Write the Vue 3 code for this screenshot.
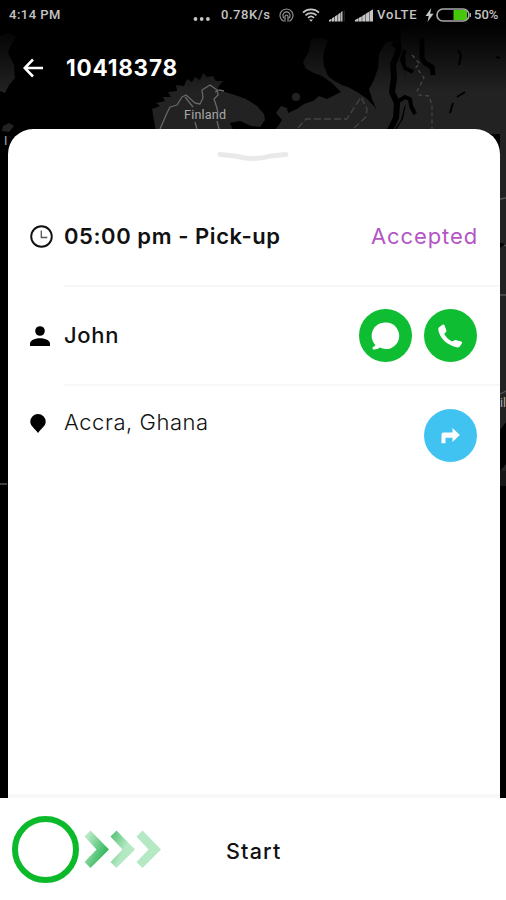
<template>
    <div class="screen">
        <svg class="map" viewBox="0 0 506 900" aria-hidden="true">
            <defs>
                <linearGradient id="shade" x1="0" y1="0" x2="0" y2="1">
                    <stop offset="0" stop-color="#000" stop-opacity="1" />
                    <stop offset="0.3" stop-color="#000" stop-opacity="0.95" />
                    <stop offset="1" stop-color="#000" stop-opacity="0" />
                </linearGradient>
            </defs>
            <rect width="506" height="900" fill="#000" />
            <!-- land -->
            <g fill="#222">
                <path d="M0 36l8-3 8 4-5 8-3 8 6 12 1 13-6 7-4 8-5-2z" />
                <path d="M3 126l6-3 5 3-5 6-7-1z" />
                <path
                    d="M156 132L152 109 160 106 156 103 165 101 163 97 171 97 168 92 177 91 176 85 184 86 187 79 192 82 195 77 200 80 203 73 207 77 213 76 216 81 223 81 219 86 217 91 225 92 235 95 246 99 257 106 264 114 265 120 260 127 251 126 240 121 230 123 234 132z"
                />
                <path d="M321 38l7 2-3 8-2 9 1 9 4 10 5 4 9 5 6 2 9 5 9 6 8 8 3 5-5-12-3-10 5-9 4-12 1-14 7-12 11-1 6 8 1 19 2 10-2 13 4 9-4 8-3 12-6 9H276l6-9-6-7 5-7 6 2 1 5 9-4 7-5 9-3 6-5 8 3 8-4 6-3-9-9-10-7-8-3-8-4-3-7 6-11 2-12z" />
                <path
                    d="M400 20h106v480l-6-15V134H394l4-7 5-8 3-15-2-7-4-6 6-15-3-8 3-8-5-12z"
                />
                <circle cx="296" cy="97" r="4" />
            </g>
            <!-- inlets and lakes -->
            <g fill="none" stroke="#000" stroke-linejoin="round">
                <path d="M393 43l6 4 -2 8-4 9 1 14-2 14 5 11-1 15-7 14" stroke-width="6" />
                <path d="M397 102l8-5 5 2 1 7 4 8" stroke-width="4" />
                <path d="M422 38v20l3 5 7 4 1 8" stroke-width="5" />
                <path d="M405 50l-3 9 3 9 8 4" stroke-width="4" />
                <path d="M453 103l-3 10M458 50l3 5-2 10M457 97l8-5M500 58l-4-1" stroke-width="2" />
            </g>
            <rect width="506" height="92" fill="url(#shade)" />
            <!-- borders -->
            <g fill="none" stroke="#686868" stroke-width="1.3" stroke-linejoin="round">
                <path d="M160 129l7-16 3-6 7-2 5-8 4-2 9 8 5 1 3-6-1-8 8-5 7 5 1 5-4 4 3 9 1 5M193 107l-8-10M195 122l2 7M217 121l2 8M215 92l4-2 5 1" />
                <path d="M298 128l8-9h41l14-22 6 12-1 8-13 12" stroke="#444" stroke-dasharray="7 3" />
                <path d="M412 55l8 9-4 3 8 11-7 13 2 4 10 1 3 9v24" stroke="#444" stroke-dasharray="4 3" />
                <path d="M500 199l6-1M500 242l6 4M500 295h6M500 394l6-3M500 458l6-2M500 485l6-2M0 484h7" stroke="#555" />
            </g>
            <path d="M500 430l6-8v42l-6 7zM500 242l5 2-5 4z" fill="#000" />
            <path d="M500 471h6v29l-6-14z" fill="#171717" />
            <path d="M500 486h6v314h-6z" fill="#000" />
            <g class="map-label">
                <text x="184" y="119" textLength="42">Finland</text>
                <text x="4" y="145">I</text>
                <text x="500" y="407">il</text>
            </g>
        </svg>

        <header class="status">
            <span class="time">4:14 PM</span>
            <div class="indicators">
                <svg width="18" height="6" viewBox="0 0 18 6" class="dots">
                    <circle cx="2.5" cy="3" r="1.9" />
                    <circle cx="8.7" cy="3" r="1.9" />
                    <circle cx="14.9" cy="3" r="1.9" />
                </svg>
                <span class="speed">0.78K/s</span>
                <svg width="15" height="15" viewBox="0 0 15 15" class="hotspot">
                    <path d="M4.7 13.3A6.5 6.5 0 1 1 10.3 13.3" />
                    <path d="M5.4 10.4A3.6 3.6 0 1 1 9.6 10.4" />
                    <path d="M6 13.8V8.5a1.5 1.5 0 0 1 3 0v5.3" />
                </svg>
                <svg width="18" height="14" viewBox="0 0 18 14" class="wifi">
                    <path d="M1 4.7a11.5 11.5 0 0 1 16 0M3.5 7.3a8 8 0 0 1 11 0M6 9.8a4.5 4.5 0 0 1 6 0" />
                    <path d="M7 11.4h4L9 13.7z" class="fill" />
                </svg>
                <svg width="16" height="13" viewBox="0 0 16 13" class="signal">
                    <path d="M0 12.5V11l2.500-1.200v2.700zM3 12.500V9.200l2.500-1.400v4.700zM6 12.500V7.300l2.600-1.500v6.700zM9.100 12.500V5.200l2.500-1.700v9zM12.100 12.500V3l1.400-1v10.500z" />
                    <path d="M14.700 1.500h1v11h-1z" opacity="0.25" />
                </svg>
                <svg width="18" height="13" viewBox="0 0 18 13" class="signal second">
                    <path d="M0 12.500V11l3.200-1.700v3.200zM3.600 12.500V9l3.200-1.700v5.200zM7.200 12.500V7l3.200-1.900v7.400zM10.800 12.500V4.700l3.200-2v9.800zM14.400 12.500V2.400L18 .3v12.200z" />
                </svg>
                <span class="volte">VoLTE</span>
                <svg width="9" height="14" viewBox="0 0 9 14" class="bolt">
                    <path d="M6.200 0L.5 8h3.200L2.500 14 8.600 5.800H5.200z" />
                </svg>
                <svg width="35" height="14" viewBox="0 0 35 14" class="battery">
                    <path d="M17.500 2H29a2 2 0 0 1 2 2v6a2 2 0 0 1-2 2H17.500z" fill="#45c80a" />
                    <rect x="1" y="1" width="32" height="12" rx="6" fill="none" stroke="#aaa" stroke-width="1.700" />
                    <path d="M34.500 5v4" stroke="#aaa" />
                </svg>
                <span class="percent">50%</span>
            </div>
        </header>

        <nav class="topbar">
            <svg width="20" height="20" viewBox="0 0 20 20" class="back">
                <path d="M10 1.500L1.700 10l8.300 8.500M2 10h18" />
            </svg>
            <h1>{{ orderId }}</h1>
        </nav>

        <main class="sheet">
            <svg class="handle" width="72" height="13" viewBox="0 0 72 13">
                <path d="M3 4.500L20 6.300Q36 10.500 52 6.300L69 4.500" />
            </svg>

            <section class="row">
                <svg class="icon" width="23" height="23" viewBox="0 0 23 23">
                    <circle cx="11.500" cy="11.500" r="10.300" fill="none" stroke="#111" stroke-width="1.900" />
                    <path d="M11.300 5.500v7h6" fill="none" stroke="#555" stroke-width="1.300" />
                </svg>
                <div class="body">
                    <span class="pickup">{{ pickup }}</span>
                    <span class="state">{{ state }}</span>
                </div>
            </section>

            <section class="row">
                <svg class="icon" width="20" height="20" viewBox="0 0 20 20">
                    <circle cx="10" cy="5" r="4.800" />
                    <path d="M0 20v-2.500C0 14 6 12.300 10 12.300s10 1.700 10 5.200V20z" />
                </svg>
                <div class="body">
                    <span class="name">{{ customer }}</span>
                    <div class="actions">
                        <button class="round green" aria-label="Message">
                            <svg width="53" height="53" viewBox="0 0 53 53">
                                <path d="M27 13.500a13.300 13.300 0 1 1-6.200 25.100C18.700 40.300 16.300 40.800 13.800 40.500l-.3-2 3-2.300A13.300 13.300 0 0 1 27 13.500z" />
                            </svg>
                        </button>
                        <button class="round green" aria-label="Call">
                            <svg width="53" height="53" viewBox="0 0 53 53">
                                <path d="M14.800 18.500l3.700-2.800q1.400-.7 2 .6l1.800 5q.4 1.300-.7 2.100l-1.400 1.300c1.600 3.300 4.300 6 7.900 7.800l2.400-1.300q1-.4 2 .1l4.800 1.300q1.300.7.600 1.900l-2.300 3.200c-.9 1-2.500.9-4 .4C23 35.700 16.300 29.500 14.400 21.500q-.4-2 .4-3z" />
                            </svg>
                        </button>
                    </div>
                </div>
            </section>

            <section class="row place">
                <svg class="icon pin" width="16" height="19" viewBox="0 0 16 19">
                    <path d="M8 0a7.700 7.700 0 0 1 7.700 7.700C15.700 12 11 14.500 8 19 5 14.500.3 12 .3 7.700A7.700 7.700 0 0 1 8 0z" />
                </svg>
                <div class="body">
                    <span class="address">{{ address }}</span>
                    <button class="round blue" aria-label="Directions">
                        <svg width="53" height="53" viewBox="0 0 53 53">
                            <path d="M17.500 34.300v-8.500q0-2.300 2.300-2.300h8.700v-4.500L35.800 26l-7.300 6.900v-4.200h-7v5.600z" />
                        </svg>
                    </button>
                </div>
            </section>
        </main>

        <footer class="slider">
            <div class="knob"></div>
            <svg class="chevrons" width="77" height="39" viewBox="0 0 77 39">
                <defs>
                    <linearGradient id="fadeIn" x1="0" y1="0" x2="0.800" y2="0.600">
                        <stop offset="0.200" stop-color="#b5e9c3" />
                        <stop offset="1" stop-color="#3cba62" />
                    </linearGradient>
                    <linearGradient id="fadeOut" x1="0" y1="0" x2="0.700" y2="0.500">
                        <stop offset="0" stop-color="#49bd6d" />
                        <stop offset="0.900" stop-color="#b5e9c3" />
                    </linearGradient>
                </defs>
                <path
                    v-for="(fill, i) in chevrons"
                    :key="i"
                    d="M6.500 .5L25 19.500 6.500 38 .5 32 12.500 19.500.5 6.500z"
                    :transform="`translate(${i * 26} 0)`"
                    :fill="fill"
                />
            </svg>
            <span class="start">Start</span>
        </footer>
    </div>
</template>

<script setup>
import { ref } from "vue";

const orderId = ref("10418378");
const pickup = ref("05:00 pm - Pick-up");
const state = ref("Accepted");
const customer = ref("John");
const address = ref("Accra, Ghana");

const chevrons = ["url(#fadeIn)", "url(#fadeOut)", "#b5e9c3"];
</script>

<style>
body {
    margin: 0;
    background: #000;
}
</style>

<style scoped>
.screen {
    position: relative;
    display: flex;
    flex-direction: column;
    width: 506px;
    height: 900px;
    overflow: hidden;
    font-family: Inter, "Open Sans", sans-serif;
    color: #111;
}

.screen * {
    box-sizing: border-box;
}

svg {
    display: block;
    flex: none;
}

.map {
    position: absolute;
    inset: 0;
    width: 506px;
    height: 900px;
    z-index: -1;
}

.map-label {
    font: 12.5px Roboto, sans-serif;
    fill: #aaa;
}

.status {
    display: flex;
    justify-content: space-between;
    height: 30px;
    padding: 0 8px 0 9px;
    font: 500 13px/30px Roboto, sans-serif;
    color: #c4c4c4;
    fill: #c4c4c4;
    white-space: nowrap;
}

.time {
    letter-spacing: 0.5px;
}

.indicators {
    display: flex;
    align-items: center;
}

.dots {
    margin: 7px 10px 0 0;
}

.speed {
    width: 50px;
    letter-spacing: 0.55px;
}

.hotspot {
    margin-left: 8px;
    fill: none;
    stroke: #999;
    stroke-width: 1.1;
}

.wifi {
    margin-left: 8px;
    fill: none;
    stroke: #c4c4c4;
    stroke-width: 1.7;
}

.wifi .fill {
    fill: #c4c4c4;
    stroke: none;
}

.signal {
    margin-left: 9px;
}

.signal.second {
    margin-left: 10px;
}

.volte {
    width: 41px;
    margin-left: 4px;
    letter-spacing: 0.85px;
}

.bolt {
    margin-left: 7px;
}

.battery {
    margin-left: 2px;
}

.percent {
    width: 24px;
    margin-left: 3px;
}

.topbar {
    display: flex;
    align-items: center;
    height: 76px;
    padding-left: 23px;
    color: #fff;
}

.back {
    fill: none;
    stroke: #fff;
    stroke-width: 2.6;
}

h1 {
    margin: 0 0 0 23px;
    font-size: 22.5px;
    font-weight: 700;
    line-height: 28px;
    letter-spacing: 0.8px;
}

.sheet {
    display: flex;
    flex-direction: column;
    width: 492px;
    height: 669px;
    margin: 23px 0 0 8px;
    border-bottom: 4px solid #f8f8f8;
    border-radius: 25px 25px 0 0;
    background: #fff;
}

.handle {
    margin: 21px 0 24px 209px;
    fill: none;
    stroke: #e9e9e9;
    stroke-width: 5;
    stroke-linecap: round;
}

.row {
    display: flex;
    align-items: center;
    height: 99.5px;
    padding-left: 22px;
}

.icon {
    margin-right: auto;
}

.body {
    display: flex;
    align-items: center;
    justify-content: space-between;
    width: 436px;
    height: 100%;
    padding-right: 23px;
    border-bottom: 2px solid #f7f7f7;
    white-space: nowrap;
}

.pickup {
    font-size: 22px;
    font-weight: 600;
    letter-spacing: 0.57px;
}

.state {
    margin-right: -1px;
    font-size: 22px;
    letter-spacing: 0.9px;
    color: #b555c5;
}

.name {
    font-size: 22px;
    font-weight: 500;
    letter-spacing: 0.7px;
}

.address {
    margin-bottom: 27px;
    font-size: 22px;
    font-weight: 300;
    letter-spacing: 0.55px;
}

.place .body {
    border: 0;
}

.pin {
    margin-bottom: 24px;
}

.actions {
    display: flex;
    gap: 12px;
}

.round {
    width: 53px;
    height: 53px;
    padding: 0;
    border: 0;
    border-radius: 50%;
    fill: #fff;
}

.green {
    background: #0fbd32;
}

.blue {
    background: #41c3f2;
}

.slider {
    display: flex;
    align-items: center;
    flex: 1;
    padding-left: 12px;
    background: #fff;
}

.knob {
    width: 67px;
    height: 67px;
    border: 6.5px solid #0bb92b;
    border-radius: 50%;
}

.chevrons {
    margin-left: 5px;
}

.start {
    margin: 3px 0 0 65px;
    font-size: 21.5px;
    font-weight: 500;
    letter-spacing: 1.2px;
}
</style>
